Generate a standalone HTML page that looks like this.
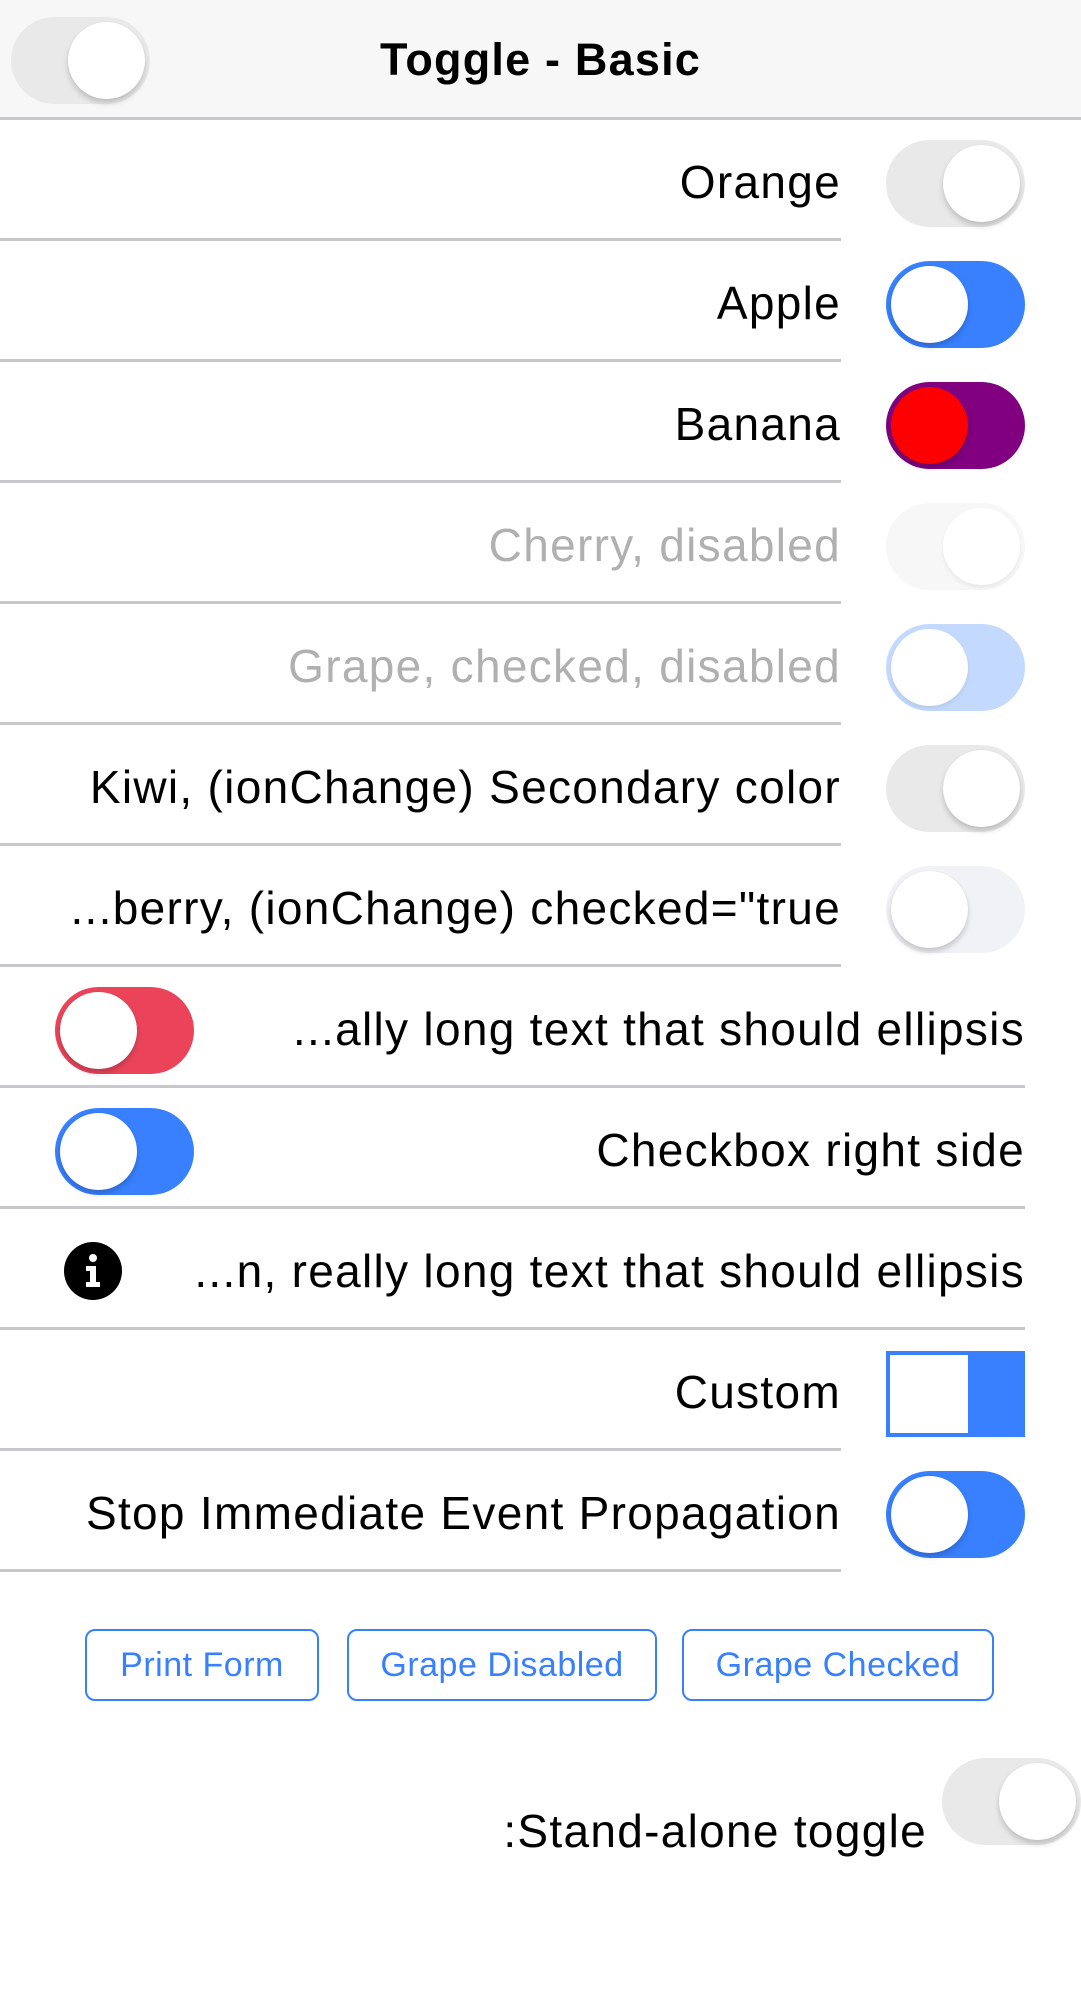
<!DOCTYPE html>
<html><head><meta charset="utf-8"><style>
*{margin:0;padding:0;box-sizing:border-box}
body{width:1081px;height:1999px;background:#fff;position:relative;overflow:hidden;font-family:"Liberation Sans",sans-serif}
.hdr{position:absolute;left:0;top:0;width:1081px;height:120px;background:#f7f7f7;border-bottom:3px solid #c8c7cc}
.title{position:absolute;left:0;width:1081px;top:0;height:120px;line-height:120px;text-align:center;font-weight:bold;font-size:45px;letter-spacing:1.2px;color:#000}
.line{position:absolute;left:0;height:3px;background:#c8c7cc}
.lbl{position:absolute;right:240px;font-size:46px;letter-spacing:1.3px;line-height:62px;white-space:nowrap;color:#000;text-align:right}
.lbl.full{right:56px}
.dis{color:#b0b0b0}
.tg{position:absolute;width:139px;height:87px;border-radius:44px;background:#e9e9e9}
.kn{position:absolute;top:5px;width:77px;height:77px;border-radius:50%;background:#fff;box-shadow:0 4px 6px rgba(0,0,0,.18),0 0 1px rgba(0,0,0,.1)}
.kr{right:5px}.kl{left:5px}
.btn{position:absolute;top:1629px;height:72px;border:2px solid #3880ff;border-radius:10px;color:#3880ff;font-size:34px;letter-spacing:0.5px;line-height:68px;text-align:center}
</style></head><body>
<div class="hdr"></div>
<div class="tg" style="left:11px;top:17px"><div class="kn kr"></div></div>
<div class="title">Toggle - Basic</div>

<div class="lbl" style="top:151px">Orange</div>
<div class="tg" style="left:886px;top:140px"><div class="kn kr"></div></div>
<div class="line" style="top:238px;width:841px"></div>

<div class="lbl" style="top:272px">Apple</div>
<div class="tg" style="left:886px;top:261px;background:#3880ff"><div class="kn kl"></div></div>
<div class="line" style="top:359px;width:841px"></div>

<div class="lbl" style="top:393px">Banana</div>
<div class="tg" style="left:886px;top:382px;background:#800080"><div class="kn kl" style="background:#f00"></div></div>
<div class="line" style="top:480px;width:841px"></div>

<div class="lbl dis" style="top:514px">Cherry, disabled</div>
<div class="tg" style="left:886px;top:503px;background:#f7f7f7"><div class="kn kr" style="box-shadow:0 3px 4px rgba(0,0,0,.06)"></div></div>
<div class="line" style="top:601px;width:841px"></div>

<div class="lbl dis" style="top:635px">Grape, checked, disabled</div>
<div class="tg" style="left:886px;top:624px;background:#c4d9fe"><div class="kn kl" style="box-shadow:0 3px 4px rgba(0,0,0,.07)"></div></div>
<div class="line" style="top:722px;width:841px"></div>

<div class="lbl" style="top:756px">Kiwi, (ionChange) Secondary color</div>
<div class="tg" style="left:886px;top:745px"><div class="kn kr"></div></div>
<div class="line" style="top:843px;width:841px"></div>

<div class="lbl" style="top:877px">...berry, (ionChange) checked="true</div>
<div class="tg" style="left:886px;top:866px;background:#f1f2f5"><div class="kn kl"></div></div>
<div class="line" style="top:964px;width:841px"></div>

<div class="tg" style="left:55px;top:987px;background:#eb445a"><div class="kn kl"></div></div>
<div class="lbl full" style="top:998px">...ally long text that should ellipsis</div>
<div class="line" style="top:1085px;width:1025px"></div>

<div class="tg" style="left:55px;top:1108px;background:#3880ff"><div class="kn kl"></div></div>
<div class="lbl full" style="top:1119px">Checkbox right side</div>
<div class="line" style="top:1206px;width:1025px"></div>

<svg style="position:absolute;left:63px;top:1241px" width="60" height="60" viewBox="0 0 60 60"><circle cx="30" cy="30" r="29" fill="#000"/><circle cx="30" cy="17" r="4" fill="#fff"/><path d="M23 25h10v16h4v5H23v-5h4V30h-4z" fill="#fff"/></svg>
<div class="lbl full" style="top:1240px">...n, really long text that should ellipsis</div>
<div class="line" style="top:1327px;width:1025px"></div>

<div class="lbl" style="top:1361px">Custom</div>
<div style="position:absolute;left:886px;top:1351px;width:139px;height:86px;background:#3880ff"><div style="position:absolute;left:4px;top:4px;width:78px;height:78px;background:#fff"></div></div>
<div class="line" style="top:1448px;width:841px"></div>

<div class="lbl" style="top:1482px">Stop Immediate Event Propagation</div>
<div class="tg" style="left:886px;top:1471px;background:#3880ff"><div class="kn kl"></div></div>
<div class="line" style="top:1569px;width:841px"></div>

<div class="btn" style="left:85px;width:234px">Print Form</div>
<div class="btn" style="left:347px;width:310px">Grape Disabled</div>
<div class="btn" style="left:682px;width:312px">Grape Checked</div>

<div class="lbl" style="top:1800px;right:154px">:Stand-alone toggle</div>
<div class="tg" style="left:942px;top:1758px"><div class="kn kr"></div></div>
</body></html>
